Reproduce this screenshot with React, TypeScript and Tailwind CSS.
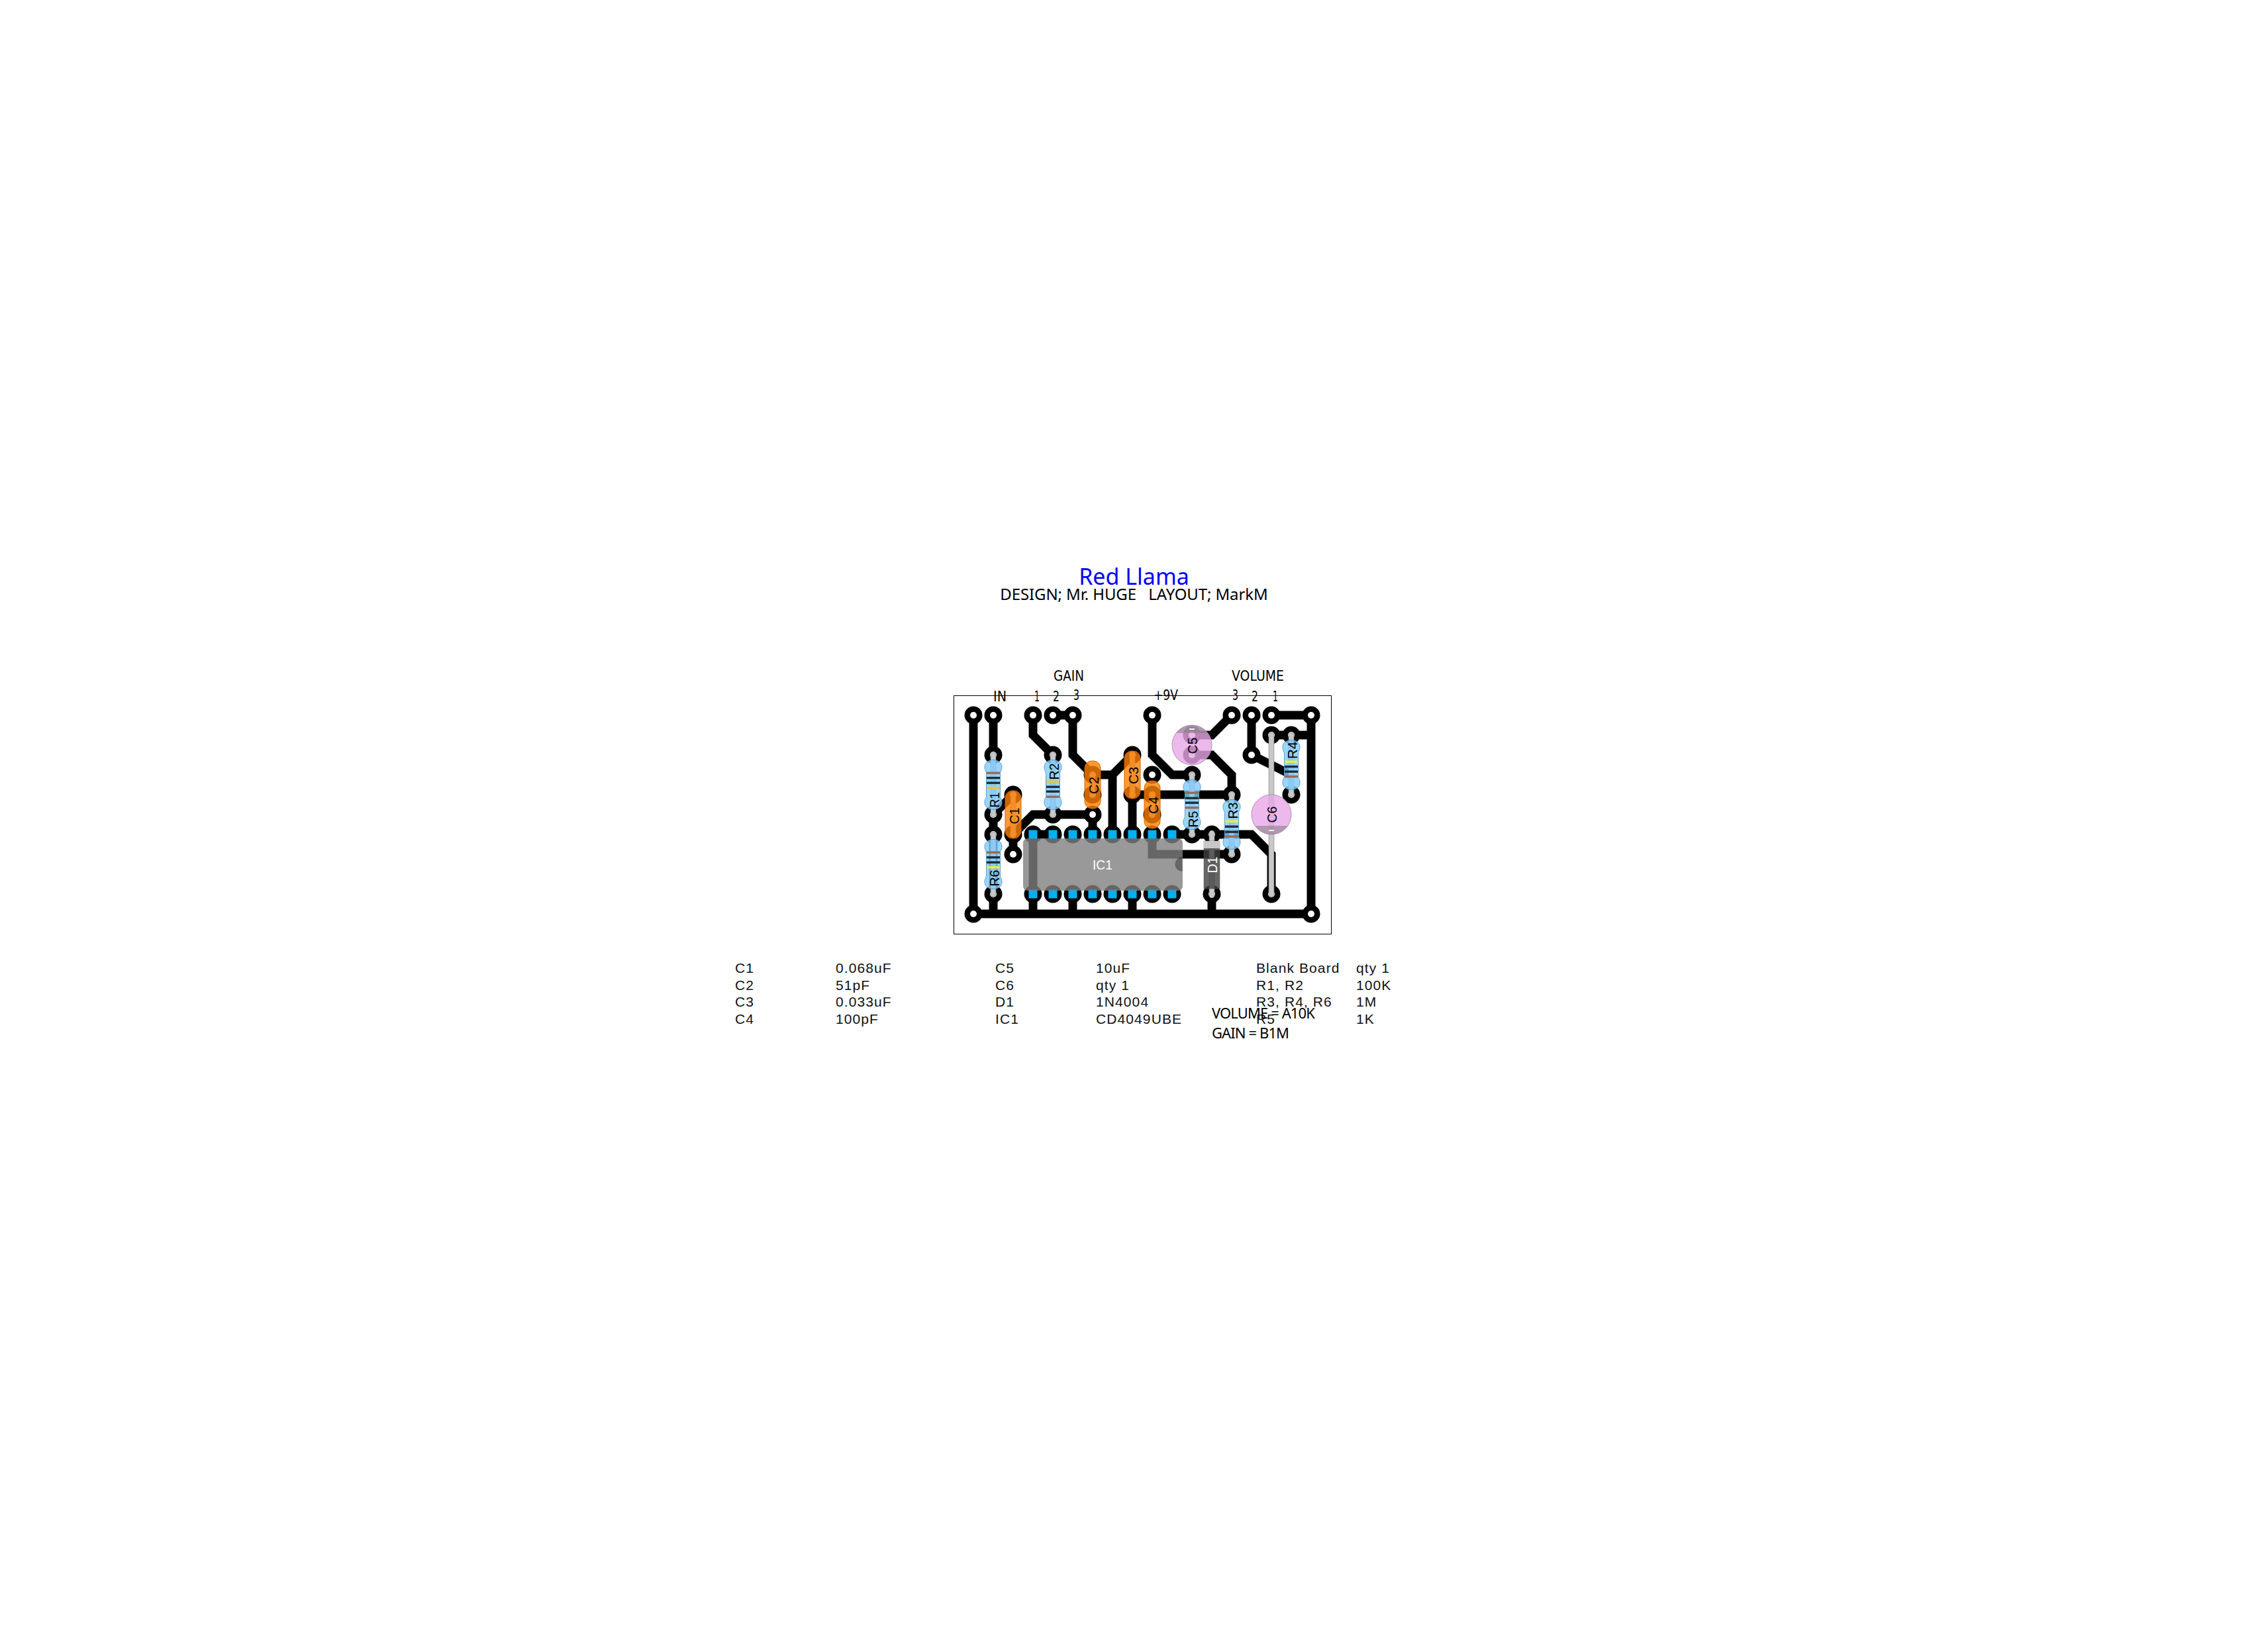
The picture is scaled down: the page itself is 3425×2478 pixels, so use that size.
import React from "react";

const tracePaths = [
  "M1470 1080V1380H1980V1080H1920",
  "M1920 1110H1980",
  "M1500 1080V1140",
  "M1500 1380V1230L1530 1200",
  "M1560 1080V1110L1590 1140",
  "M1590 1080H1620V1140L1650 1170H1680L1710 1140",
  "M1680 1170V1260",
  "M1590 1260H1560V1380",
  "M1530 1290V1260L1560 1230H1650V1260",
  "M1620 1350V1380",
  "M1710 1350V1380",
  "M1830 1350V1380",
  "M1710 1260V1200H1860V1170L1830 1140H1800",
  "M1740 1080V1140L1770 1170H1800",
  "M1860 1080L1830 1110H1800",
  "M1890 1080V1140L1950 1170",
  "M1770 1260H1890L1920 1290V1350",
  "M1740 1260V1290H1860",
];

const pads: [number, number][] = [
  [1470, 1080], [1500, 1080], [1560, 1080], [1590, 1080], [1620, 1080], [1740, 1080], [1860, 1080], [1890, 1080], [1920, 1080], [1980, 1080],
  [1800, 1110], [1920, 1110], [1950, 1110],
  [1500, 1140], [1590, 1140], [1710, 1140], [1800, 1140], [1890, 1140],
  [1650, 1170], [1740, 1170], [1800, 1170],
  [1530, 1200], [1650, 1200], [1710, 1200], [1740, 1200], [1860, 1200], [1950, 1200],
  [1500, 1230], [1590, 1230], [1650, 1230], [1740, 1230],
  [1500, 1260], [1530, 1260], [1800, 1260], [1830, 1260],
  [1530, 1290], [1860, 1290],
  [1500, 1350], [1830, 1350], [1920, 1350],
  [1470, 1380], [1980, 1380],
];

const pins = [1560, 1590, 1620, 1650, 1680, 1710, 1740, 1770];

const BROWN = "#9a6b52";
const DARK = "#1c2e3b";
const YEL1 = "#e8c53a";
const YEL2 = "#ecf033";

const resistors = [
  { x: 1500, y1: 1140, y2: 1230, bands: [[1167, BROWN], [1174.5, DARK], [1182, DARK], [1189.5, YEL1]] },
  { x: 1590, y1: 1140, y2: 1230, bands: [[1180, YEL1], [1188, DARK], [1195, DARK], [1203, BROWN]] },
  { x: 1500, y1: 1260, y2: 1350, bands: [[1287, BROWN], [1294.5, DARK], [1302, DARK], [1309.5, YEL2]] },
  { x: 1800, y1: 1170, y2: 1260, bands: [[1197, BROWN], [1205, DARK], [1212, DARK], [1219.5, BROWN]] },
  { x: 1860, y1: 1200, y2: 1290, bands: [[1240, YEL2], [1248, DARK], [1256, DARK], [1263, BROWN]] },
  { x: 1950, y1: 1110, y2: 1200, bands: [[1150, YEL2], [1157.5, DARK], [1165, DARK], [1172.5, BROWN]] },
] as const;

const caps = [
  { x: 1530, y1: 1200, y2: 1260 },
  { x: 1650, y1: 1170, y2: 1200 },
  { x: 1710, y1: 1140, y2: 1200 },
  { x: 1740, y1: 1200, y2: 1230 },
];

const partLabels = [
  ["R1", 1501, 1208, 23], ["R2", 1591, 1165, 25], ["R6", 1501, 1326, 25], ["R5", 1801, 1237, 25], ["R3", 1861, 1224, 25], ["R4", 1951, 1133, 26],
  ["C1", 1531, 1232, 25], ["C2", 1651, 1186, 26], ["C3", 1711, 1171, 26], ["C4", 1741, 1216, 26], ["C5", 1800, 1126, 25], ["C6", 1920, 1230, 25],
] as const;

const headLabels = [
  ["IN", 1500, 1059, 20], ["1", 1562, 1059, 8], ["2", 1590, 1059, 10], ["3", 1621, 1057, 9], ["+9V", 1742, 1057, 37],
  ["3", 1861, 1057, 9], ["2", 1890, 1059, 10], ["1", 1922, 1059, 8], ["GAIN", 1591, 1028, 46], ["VOLUME", 1860, 1028, 79],
] as const;

const bodyPath =
  "M-13 -27C-13 -34 -6 -37.5 0 -37.5C6 -37.5 13 -34 13 -27C13 -22 11 -20 10.5 -18L10.5 18C11 20 13 22 13 27C13 34 6 37.5 0 37.5C-6 37.5 -13 34 -13 27C-13 22 -11 20 -10.5 18L-10.5 -18C-11 -20 -13 -22 -13 -27Z";

function Lead({ x, y1, y2 }: { x: number; y1: number; y2: number }) {
  return (
    <g strokeLinecap="round">
      <line x1={x} y1={y1} x2={x} y2={y2} stroke="#8c8c8c" strokeWidth={8.5} />
      <line x1={x} y1={y1} x2={x} y2={y2} stroke="#c8c8c8" strokeWidth={7} />
    </g>
  );
}

function Board() {
  return (
    <svg viewBox="1420 1000 620 430" className="block w-[620px] h-[430px] ml-[1420px]">
      <rect x={1440.5} y={1050.5} width={570} height={360} fill="none" stroke="#000" strokeWidth={1} />

      <g fill="none" strokeLinejoin="miter">
        {tracePaths.map((d) => (
          <path key={d + "g"} d={d} stroke="#999" strokeWidth={13.5} />
        ))}
        {tracePaths.map((d) => (
          <path key={d} d={d} stroke="#000" strokeWidth={12.5} />
        ))}
      </g>

      {pads.map(([x, y]) => (
        <g key={`${x}-${y}`}>
          <circle cx={x} cy={y} r={13.5} fill="#000" />
          <circle cx={x} cy={y} r={5} fill="#fff" />
        </g>
      ))}
      {pins.map((x) => (
        <g key={x}>
          <circle cx={x} cy={1260} r={13.5} fill="#000" />
          <circle cx={x} cy={1350} r={13.5} fill="#000" />
          <rect x={x - 6.5} y={1253.5} width={13} height={13} fill="#00b0f0" />
          <rect x={x - 6.5} y={1343.5} width={13} height={13} fill="#00b0f0" />
        </g>
      ))}

      <rect x={1545.5} y={1266.5} width={240} height={78} rx={6} fill="#808080" fillOpacity={0.8} stroke="#808080" strokeOpacity={0.6} />
      <path d="M1785.5 1294A11 11 0 0 0 1785.5 1316Z" fill="#000" fillOpacity={0.33} />
      <text x={1650} y={1313} fill="#fff" fontFamily="'Liberation Sans', sans-serif" fontSize={21} textLength={30} lengthAdjust="spacingAndGlyphs">
        IC1
      </text>

      <Lead x={1830} y1={1258} y2={1352} />
      <rect x={1818} y={1270} width={24} height={72} fill="#404040" fillOpacity={0.8} stroke="#555" strokeWidth={0.5} />
      <rect x={1818} y={1270} width={24} height={11} fill="#c8c8c8" />
      <text
        transform="rotate(-90 1831 1306)"
        x={1831}
        y={1306}
        fill="#fff"
        fontFamily="'Liberation Sans', sans-serif"
        fontSize={20}
        textAnchor="middle"
        dominantBaseline="central"
        textLength={25}
        lengthAdjust="spacingAndGlyphs"
      >
        D1
      </text>

      {caps.map((c) => (
        <g key={c.x}>
          <Lead x={c.x} y1={c.y1} y2={c.y2} />
          <rect
            x={c.x - 12}
            y={(c.y1 + c.y2) / 2 - 36}
            width={24}
            height={72}
            rx={11}
            fill="#ff8000"
            fillOpacity={0.8}
            stroke="#cc6600"
            strokeWidth={1}
          />
        </g>
      ))}

      <Lead x={1920} y1={1110} y2={1350} />

      <circle cx={1800} cy={1125} r={30} fill="#e8a8e8" fillOpacity={0.8} stroke="#b48cb4" strokeWidth={1} />
      <path d="M1776 1107A30 30 0 0 1 1824 1107Z" fill="#808080" fillOpacity={0.55} />
      <rect x={1796} y={1100} width={8} height={2} fill="#f0f0f0" />
      <circle cx={1920} cy={1230} r={30} fill="#e8a8e8" fillOpacity={0.8} stroke="#b48cb4" strokeWidth={1} />
      <path d="M1895.3 1247A30 30 0 0 0 1944.7 1247Z" fill="#808080" fillOpacity={0.55} />
      <rect x={1916} y={1253} width={8} height={2} fill="#f0f0f0" />

      {resistors.map((r) => {
        const cy = (r.y1 + r.y2) / 2;
        return (
          <g key={`${r.x}-${r.y1}`}>
            <Lead x={r.x} y1={r.y1} y2={r.y2} />
            <path d={bodyPath} transform={`translate(${r.x} ${cy})`} fill="#80ccff" fillOpacity={0.8} stroke="#5f9dc8" strokeWidth={1} />
            {r.bands.map(([y, color], i) => (
              <rect key={i} x={r.x - 10} y={y - 1.5} width={20} height={3.4} fill={color} />
            ))}
          </g>
        );
      })}

      {partLabels.map(([t, x, y, len]) => (
        <text
          key={t}
          transform={`rotate(-90 ${x} ${y})`}
          x={x}
          y={y}
          fill="#000"
          fontFamily="'Liberation Sans', sans-serif"
          fontSize={21}
          textAnchor="middle"
          dominantBaseline="central"
          textLength={len}
          lengthAdjust="spacingAndGlyphs"
        >
          {t}
        </text>
      ))}

      {headLabels.map(([t, x, y, len], i) => (
        <text
          key={i}
          x={x}
          y={y}
          fill="#000"
          fontFamily="'DejaVu Sans', sans-serif"
          fontSize={21}
          textLength={len}
          lengthAdjust="spacingAndGlyphs"
        >
          {t}
        </text>
      ))}
    </svg>
  );
}

const rows = [
  ["C1", "0.068uF", "C5", "10uF", "Blank Board", "qty 1"],
  ["C2", "51pF", "C6", "qty 1", "R1, R2", "100K"],
  ["C3", "0.033uF", "D1", "1N4004", "R3, R4, R6", "1M"],
  ["C4", "100pF", "IC1", "CD4049UBE", "R5", "1K"],
];

export default function App() {
  return (
    <div className="relative w-[3425px] h-[2478px] bg-white overflow-hidden text-black font-['Noto_Sans',sans-serif]">
      <div className="pt-[853px] text-center">
        <div className="text-[34px] leading-[34px] text-[#0000ff]">Red Llama</div>
        <div className="text-[24px] leading-[20px] tracking-[-0.1px] whitespace-pre">{"DESIGN; Mr. HUGE   LAYOUT; MarkM"}</div>
      </div>
      <div className="mt-[93px]">
        <Board />
      </div>
      <div className="ml-[1110px] mt-[19px] grid grid-cols-[152px_241px_152px_242px_151px_auto] auto-rows-[25.6px] text-[21px] leading-[25.6px] tracking-[1.1px] font-['Liberation_Sans',sans-serif] text-[#111]">
        {rows.flat().map((t, i) => (
          <div key={i} className="whitespace-nowrap">
            {t}
          </div>
        ))}
      </div>
      <div className="absolute left-[1830px] top-[1515px] text-[22px] leading-[29.5px] tracking-[-0.9px] font-['Noto_Sans',sans-serif]">
        <div>VOLUME = A10K</div>
        <div>GAIN = B1M</div>
      </div>
    </div>
  );
}
